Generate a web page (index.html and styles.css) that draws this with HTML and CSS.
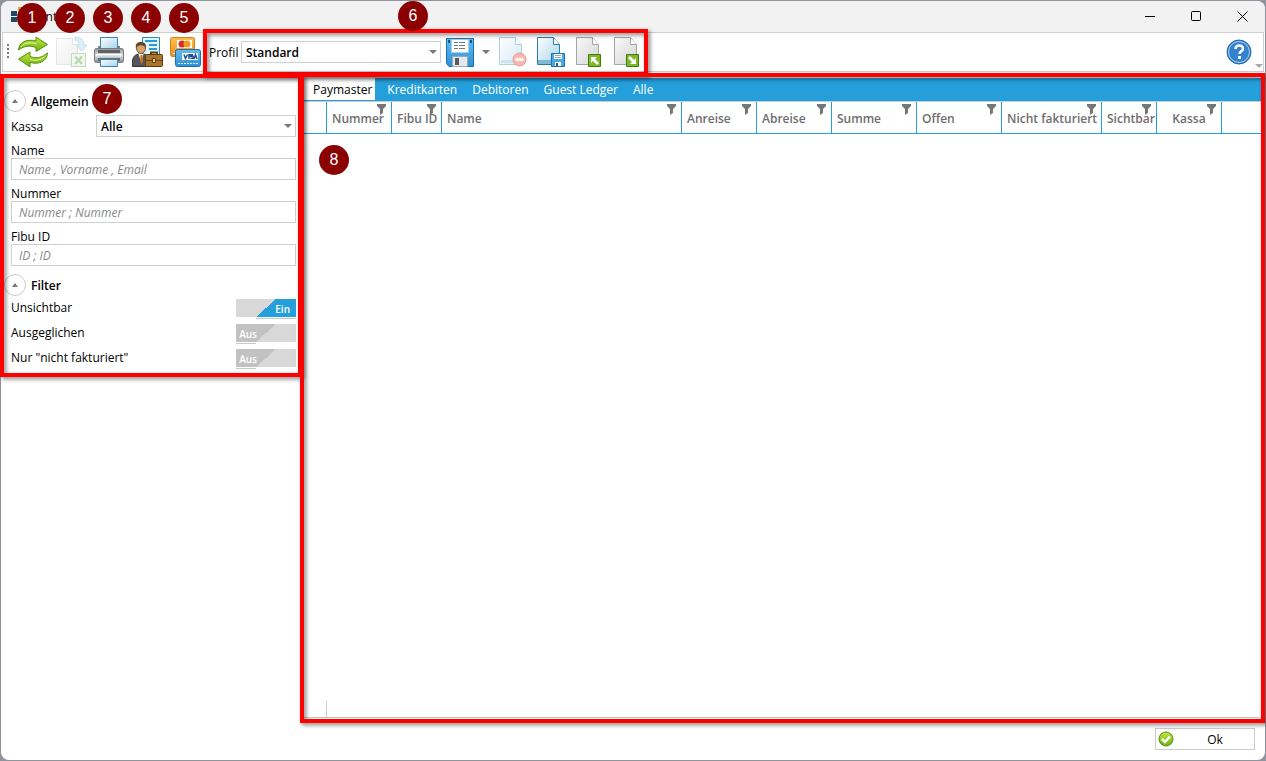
FILE: index.html
```html
<!DOCTYPE html>
<html lang="de">
<head>
<meta charset="utf-8">
<title>Konten</title>
<meta name="viewport" content="width=device-width, initial-scale=1">
<link rel="stylesheet" href="styles.css">
</head>
<body>
<svg class="defs" aria-hidden="true">
  <defs>
    <linearGradient id="green" x1="0" y1="0" x2="0" y2="1"><stop offset="0" stop-color="#c3e63c"/><stop offset="1" stop-color="#6fb00f"/></linearGradient>
    <linearGradient id="paper" x1="0" y1="0" x2="1" y2="1"><stop offset="0" stop-color="#fafafa"/><stop offset="1" stop-color="#d2d3d4"/></linearGradient>
    <linearGradient id="bluepaper" x1="0" y1="0" x2="1" y2="1"><stop offset="0" stop-color="#ffffff"/><stop offset="1" stop-color="#a5d3ea"/></linearGradient>
    <linearGradient id="metal" x1="0" y1="0" x2="0" y2="1"><stop offset="0" stop-color="#8f9296"/><stop offset=".5" stop-color="#e2e4e6"/><stop offset="1" stop-color="#85888b"/></linearGradient>
    <linearGradient id="blue" x1="0" y1="0" x2="0" y2="1"><stop offset="0" stop-color="#62bdf0"/><stop offset="1" stop-color="#2f90d4"/></linearGradient>
    <linearGradient id="gold" x1="0" y1="0" x2="0" y2="1"><stop offset="0" stop-color="#fbc04d"/><stop offset="1" stop-color="#ef8f1c"/></linearGradient>
    <symbol id="filter" viewBox="0 0 9 11"><path fill="#777" d="M0 0h9v2L6 5v4l-3 2V5L0 2z"/></symbol>
  </defs>
</svg>

<div class="window">
  <header class="titlebar">
    <svg class="app-icon" width="14" height="16" viewBox="0 0 14 16" aria-hidden="true"><path fill="#1f4766" d="M0 4h6v5H0zM0 10h6v5H0z"/><path fill="#dba42e" d="M7 0h6v7H7z"/><path fill="#2e6f9e" d="M7 8h6v7H7z"/></svg>
    <h1>Konten</h1>
    <div class="controls">
      <button type="button" aria-label="Minimieren"><svg width="11" height="11" viewBox="0 0 11 11"><path d="M0 5.500h10"/></svg></button>
      <button type="button" aria-label="Maximieren"><svg width="11" height="11" viewBox="0 0 11 11"><rect x=".5" y=".5" width="9" height="9" rx="1"/></svg></button>
      <button type="button" aria-label="Schließen"><svg width="11" height="11" viewBox="0 0 11 11"><path d="M.5.5l10 10M10.500.5l-10 10"/></svg></button>
    </div>
  </header>

  <div class="toolbar" role="toolbar">
    <span class="grip"></span>
    <div class="tool">
      <button type="button" aria-label="Aktualisieren"><svg width="32" height="32" viewBox="0 0 32 32"><g fill="url(#green)" stroke="#548f10" stroke-linejoin="round"><path d="M1.500 14C2 6.500 9 2.500 19 5V1l11.500 7.500L19 15.500v-4C12 9 7 10 1.500 14z"/><path d="M30.500 17c-.5 8-8 12-17.500 9.500V31L1.500 23 13 16v4.500c7 2.500 12 1 17.500-3.500z"/></g><path fill="none" stroke="#e4f5a0" d="M4 11c3-4 8-5 15.500-3.500M27 21c-3 3-8 4-14 2.500"/></svg></button>
      <span class="badge">1</span>
    </div>
    <div class="tool">
      <button type="button" aria-label="Excel-Export" disabled><svg width="32" height="32" viewBox="0 0 32 32"><g opacity=".35"><path fill="url(#paper)" stroke="#b4b7ba" d="M1.500 2.500h16l5 6v20h-21z"/><path fill="#fff" stroke="#b4b7ba" d="M17.500 2.500v6h5"/><path fill="#9bd0ee" stroke="#5b9fca" d="M20 1c6 0 9 3 9 8h3l-5.500 6L21 9h3c0-3-1-5-4-5z"/><rect x="16.500" y="17.500" width="14" height="13" fill="#d8efd0" stroke="#4e9b43"/><path stroke="#3a9530" stroke-width="2.500" d="M20 20.500l7 7.500M27 20.500l-7 7.500"/></g></svg></button>
      <span class="badge">2</span>
    </div>
    <div class="tool">
      <button type="button" aria-label="Drucken"><svg width="32" height="32" viewBox="0 0 32 32"><path fill="#808386" d="M5 10h22v5H5z"/><path fill="url(#bluepaper)" stroke="#3b84b9" d="M7.500 1.500h17v11h-17z"/><rect x="1.500" y="12.500" width="29" height="14" rx="2" fill="url(#metal)" stroke="#777b80"/><path fill="#5e6265" d="M5 14h22v3H5z"/><path stroke="#fff" d="M3 18.500h26"/><path fill="#6b6e71" d="M5 22h22v3H5z"/><path fill="url(#bluepaper)" stroke="#3b84b9" d="M7.500 23.500h17v7h-17z"/></svg></button>
      <span class="badge">3</span>
    </div>
    <div class="tool">
      <button type="button" aria-label="Firmenkonto"><svg width="32" height="32" viewBox="0 0 32 32"><path fill="#e4f4fc" stroke="#2886bd" d="M11.500 1.500h17v18h-17z"/><path stroke="#2b9bd6" stroke-width="2" d="M14 5h12M18 9h8M18 13h8"/><path fill="#55585b" stroke="#333" d="M1.500 30.500c-.5-9 1-11 6-12.500h5c5 1 6 4 6 12.500z"/><path fill="#fff" d="M7.500 18h5l-2 9z"/><path fill="#c8741e" d="M9.500 19h2l.5 6-1.500 3-1.500-3z"/><ellipse cx="10" cy="12" rx="4.500" ry="5.500" fill="#dca36c" stroke="#7b5a35"/><path fill="#5a4a30" d="M5 12C4 8 6.500 5.500 10.500 6c4 .5 5 3 4 6-1-2-3-3-5.500-2.500-2 0-3 1-4 2.500z"/><path fill="none" stroke="#5b3b10" stroke-width="2" d="M20 19v-2.500h6V19"/><rect x="14.500" y="18.500" width="17" height="12" rx="1" fill="#a9742b" stroke="#5b3b10"/><path stroke="#6b4514" d="M15 24.500h16"/><path fill="#f1d36b" stroke="#5b3b10" d="M21.500 22.500h3v4h-3z"/></svg></button>
      <span class="badge">4</span>
    </div>
    <div class="tool">
      <button type="button" aria-label="Kreditkarten"><svg width="32" height="32" viewBox="0 0 32 32"><rect x="1.500" y="1.500" width="24" height="19" rx="2" fill="url(#gold)" stroke="#d07e16"/><rect x="8" y="4" width="15" height="8" fill="#fff"/><circle cx="13" cy="8" r="3.500" fill="#d92b24"/><circle cx="18" cy="8" r="3.500" fill="#f29b20"/><path stroke="#fff" d="M4 17.500h4"/><rect x="6.500" y="13.500" width="25" height="17" rx="2" fill="url(#blue)" stroke="#1f6ca8"/><rect x="13" y="17" width="16" height="7" fill="#fff"/><path fill="none" stroke="#1f4e93" stroke-width="1.500" d="M15 18.500l1.500 4 2-4M20 18v5M24 18.700h-2.500v1.500H24v2h-2.500M25 23l1.500-4.500L28 23"/><path stroke="#d8effb" stroke-dasharray="2 1" d="M9 27.500h20"/></svg></button>
      <span class="badge">5</span>
    </div>

    <div class="profile">
      <label for="profil">Profil</label>
      <span class="select"><select id="profil"><option>Standard</option></select></span>
      <button type="button" aria-label="Profil speichern"><svg width="30" height="32" viewBox="0 0 30 32"><path fill="url(#blue)" stroke="#1b70b0" stroke-linejoin="round" d="M1.500 2.500h27v28H4l-2.500-3z"/><path fill="#fff" stroke="#a9cfe6" d="M6.500 3.500h17v13h-17z"/><path stroke="#777" stroke-dasharray="4 1 6 1" d="M9 6.500h12M9 9.500h12M9 12.500h12"/><path fill="#e6e9ec" stroke="#9aa9b5" d="M7.500 20.500h15v10h-15z"/><path fill="#555b61" d="M10 22h4v7h-4z"/><path fill="#14598e" d="M3 4h2v3H3zM25 4h2v3h-2z"/></svg></button>
      <button type="button" class="drop" aria-label="Speicheroptionen"><span class="arrow"></span></button>
      <button type="button" aria-label="Profil löschen" disabled><svg width="32" height="32" viewBox="0 0 32 32"><g opacity=".45"><path fill="url(#bluepaper)" stroke="#4a9bc6" d="M3.500 1.500h16l6 7v20h-22z"/><path fill="#fff" stroke="#4a9bc6" d="M19.500 1.500v7h6"/><path fill="#8dc4de" d="M5 24h19v3H5z"/></g><circle cx="23.500" cy="23.500" r="6.500" fill="#f8b9b5" stroke="#eb9a95"/><path stroke="#fff" stroke-width="2.500" d="M19.500 23.500h8"/></svg></button>
      <button type="button" aria-label="Profil speichern unter"><svg width="32" height="32" viewBox="0 0 32 32"><path fill="url(#bluepaper)" stroke="#2a7eae" d="M3.500 1.500h16l6 7v20h-22z"/><path fill="#fff" stroke="#2a7eae" d="M19.500 1.500v7h6"/><path fill="#7fb9d6" d="M4 24h19v4H4z"/><path fill="#4aa8e2" stroke="#1b70b0" d="M17.500 17.500h13v13h-13z"/><path fill="#fff" d="M20 18h8v5h-8zM21 26h6v4h-6z"/><path stroke="#9aa" d="M21 19.500h6M21 21.500h6"/><path fill="#1b5d90" d="M22 27h2v3h-2z"/></svg></button>
      <button type="button" aria-label="Profil importieren"><svg width="32" height="32" viewBox="0 0 32 32"><path fill="url(#paper)" stroke="#a3a6a8" d="M4.500 1.500h16l6 7v20h-22z"/><path fill="#fff" stroke="#a3a6a8" d="M20.500 1.500v7h6"/><path fill="#7fb927" stroke="#3f7d12" d="M16.500 18.500h12v12h-12z"/><path fill="#fff" d="M19 21h6l-2 2 4 4-2 2-4-4-2 2z"/></svg></button>
      <button type="button" aria-label="Profil exportieren"><svg width="32" height="32" viewBox="0 0 32 32"><path fill="url(#paper)" stroke="#a3a6a8" d="M4.500 1.500h16l6 7v20h-22z"/><path fill="#fff" stroke="#a3a6a8" d="M20.500 1.500v7h6"/><path fill="#7fb927" stroke="#3f7d12" d="M16.500 18.500h12v12h-12z"/><path fill="#fff" d="M26 28h-6l2-2-4-4 2-2 4 4 2-2z"/></svg></button>
      <span class="frame"></span>
      <span class="badge">6</span>
    </div>

    <button type="button" class="help" aria-label="Hilfe"><svg width="26" height="26" viewBox="0 0 26 26"><circle cx="13" cy="13" r="12" fill="#3482cc" stroke="#2465ac"/><circle cx="13" cy="13" r="10.500" fill="none" stroke="#a9d4f3"/><path fill="none" stroke="#fff" stroke-width="2.500" d="M9.500 10c0-4.500 7.500-4.500 7.500-.5 0 3-3.500 2.500-3.500 5.500"/><path fill="#fff" d="M12 17h3v3h-3z"/></svg></button>
    <span class="overflow"></span>
  </div>

  <main class="main">
    <aside class="sidebar">
      <div class="group">
        <button type="button" class="collapse" aria-label="Allgemein einklappen"><span class="arrow-up"></span></button>
        <h2>Allgemein</h2>
        <span class="badge">7</span>
      </div>
      <div class="row kassa">
        <label for="kassa">Kassa</label>
        <span class="select"><select id="kassa"><option>Alle</option></select></span>
      </div>
      <div class="field"><label for="name">Name</label><input id="name" type="text" placeholder="Name , Vorname , Email"></div>
      <div class="field"><label for="nummer">Nummer</label><input id="nummer" type="text" placeholder="Nummer ; Nummer"></div>
      <div class="field"><label for="fibu">Fibu ID</label><input id="fibu" type="text" placeholder="ID ; ID"></div>
      <div class="group second">
        <button type="button" class="collapse" aria-label="Filter einklappen"><span class="arrow-up"></span></button>
        <h2>Filter</h2>
      </div>
      <label class="row switch"><span>Unsichtbar</span><input type="checkbox" checked><span class="state">Ein</span></label>
      <label class="row switch"><span>Ausgeglichen</span><input type="checkbox"><span class="state">Aus</span></label>
      <label class="row switch"><span>Nur "nicht fakturiert"</span><input type="checkbox"><span class="state">Aus</span></label>
      <span class="frame"></span>
    </aside>

    <section class="content">
      <nav class="tabs" role="tablist">
        <button type="button" role="tab" aria-selected="true">Paymaster</button>
        <button type="button" role="tab">Kreditkarten</button>
        <button type="button" role="tab">Debitoren</button>
        <button type="button" role="tab">Guest Ledger</button>
        <button type="button" role="tab">Alle</button>
      </nav>
      <table class="grid">
        <colgroup><col class="w-mark"><col class="w-65"><col class="w-50"><col class="w-240"><col class="w-75"><col class="w-75"><col class="w-85"><col class="w-85"><col class="w-100"><col class="w-55"><col class="w-65"><col></colgroup>
        <thead>
          <tr>
            <th></th>
            <th>Nummer<svg class="funnel"><use href="#filter"/></svg></th>
            <th>Fibu ID<svg class="funnel"><use href="#filter"/></svg></th>
            <th>Name<svg class="funnel"><use href="#filter"/></svg></th>
            <th>Anreise<svg class="funnel"><use href="#filter"/></svg></th>
            <th>Abreise<svg class="funnel"><use href="#filter"/></svg></th>
            <th>Summe<svg class="funnel"><use href="#filter"/></svg></th>
            <th>Offen<svg class="funnel"><use href="#filter"/></svg></th>
            <th>Nicht fakturiert<svg class="funnel"><use href="#filter"/></svg></th>
            <th>Sichtbar<svg class="funnel"><use href="#filter"/></svg></th>
            <th class="center">Kassa<svg class="funnel"><use href="#filter"/></svg></th>
            <th></th>
          </tr>
        </thead>
      </table>
      <div class="rows"><span class="badge">8</span></div>
      <div class="summary"><span></span></div>
      <span class="frame"></span>
    </section>
  </main>

  <footer class="footer">
    <button type="button" class="ok"><svg width="16" height="16" viewBox="0 0 16 16" aria-hidden="true"><circle cx="8" cy="8" r="7" fill="url(#green)" stroke="#4f8f10"/><path fill="none" stroke="#fff" stroke-width="2.500" d="M4 8l3 3 5-5.500"/></svg><span>Ok</span></button>
  </footer>
</div>
</body>
</html>
```
FILE: styles.css
```css
* { box-sizing: border-box; }

body {
  margin: 0;
  padding: 1px;
  min-height: 100vh;
  display: flex;
  background: #8f959f;
  font: 12px/16px "Open Sans", "Noto Sans", sans-serif;
  color: #000;
}

button, input, select { font: inherit; color: inherit; }
button { padding: 0; border: 0; background: none; }
h1, h2 { margin: 0; font-size: 12px; }
svg { display: block; }
.defs { position: absolute; width: 0; height: 0; }

.window {
  flex: 1;
  min-width: 0;
  display: flex;
  flex-direction: column;
  background: #fff;
  border-radius: 8px;
}

.titlebar {
  display: flex;
  align-items: center;
  height: 31px;
  padding-left: 10px;
  background: #f2f2f2;
  border-radius: 8px 8px 0 0;
}
.app-icon { margin-bottom: 4px; }
.titlebar h1 { margin-left: 6px; font-weight: 400; }
.controls { display: flex; margin-left: auto; }
.controls button {
  width: 46px;
  height: 28px;
  display: grid;
  place-items: center;
}
.controls svg { fill: none; stroke: #000; }

.toolbar {
  display: flex;
  align-items: center;
  height: 40px;
  margin: 0 1px;
  border: 1px solid #cfcfcf;
}
.grip {
  width: 2px;
  height: 16px;
  margin: 0 5px 0 4px;
  background: repeating-linear-gradient(#777 0 2px, transparent 2px 4px);
}
.tool { position: relative; }
.tool button, .profile button {
  width: 38px;
  height: 38px;
  display: grid;
  place-items: center;
}
.profile {
  position: relative;
  display: flex;
  align-items: center;
  padding-left: 5px;
}
.profile label { width: 32px; padding-top: 2px; }
.profile .select { width: 200px; }
.profile .drop { width: 14px; }
.help { margin: 0 3px 0 auto; }
.overflow {
  align-self: flex-end;
  margin: 0 0 3px;
  border: 4px solid transparent;
  border-top-color: #aaa;
  border-bottom: 0;
}

.arrow {
  border: 4px solid transparent;
  border-top-color: #777;
  border-bottom: 0;
}
.arrow-up {
  border: 3px solid transparent;
  border-bottom: 4px solid #777;
  border-top: 0;
}

.select { position: relative; display: block; }
.select select {
  display: block;
  width: 100%;
  height: 22px;
  padding: 1px 4px 0;
  appearance: none;
  border: 1px solid #d0d0d0;
  border-radius: 0;
  background: #fff;
  font-weight: 600;
}
.select::after {
  content: "";
  position: absolute;
  right: 4px;
  top: 9px;
  border: 4px solid transparent;
  border-top-color: #777;
  border-bottom: 0;
  pointer-events: none;
}

.badge {
  position: absolute;
  z-index: 3;
  width: 30px;
  height: 30px;
  border-radius: 50%;
  background: #8b0000;
  color: #fff;
  font: 16px/30px "Liberation Sans", sans-serif;
  text-align: center;
}
.tool .badge { left: 3px; top: -30px; }
.profile .badge { left: 194px; top: -32px; }
.group .badge { left: 88px; top: -6px; }
.rows .badge { left: 15px; top: 11px; }

.frame {
  position: absolute;
  z-index: 2;
  inset: -4px;
  border: 4px solid #f00;
  filter: drop-shadow(2px 2px 2px rgba(0, 0, 0, .5));
  pointer-events: none;
}
.profile .frame { inset: -4px -3px -5px -1px; }
.content .frame { inset: -5px -4px; }

.main {
  flex: 1;
  display: flex;
  gap: 6px;
  align-items: stretch;
  padding: 6px 4px 0 3px;
}

.sidebar {
  position: relative;
  flex: 0 0 294px;
  align-self: flex-start;
  padding: 12px 2px 2px 7px;
}
.group {
  position: relative;
  display: flex;
  align-items: center;
  gap: 5px;
  height: 22px;
  margin-left: -7px;
}
.group.second { margin-top: 8px; }
.group h2 { font-weight: 600; padding-top: 2px; }
.collapse {
  width: 22px;
  height: 22px;
  display: grid;
  place-items: center;
  border: 1px solid #ccc;
  border-radius: 50%;
}
.row { display: flex; align-items: center; }
.kassa { margin-top: 3px; }
.kassa label { width: 85px; padding-top: 2px; }
.kassa .select { flex: 1; }
.field { margin-top: 5px; }
.field label { display: block; height: 16px; padding-top: 1px; }
.field input {
  display: block;
  width: 100%;
  height: 22px;
  padding: 0 7px;
  border: 1px solid #d0d0d0;
}
.field input::placeholder { color: #888; font-style: italic; opacity: 1; }

.switch { position: relative; height: 25px; }
.switch span { padding-bottom: 1px; }
.switch input {
  appearance: none;
  width: 60px;
  height: 20px;
  margin: 1px 0 0 auto;
  background:
    linear-gradient(#c8c8c8, #c8c8c8) 0 19px / 20px 1px no-repeat,
    linear-gradient(138deg, #c2c2c2 50%, #d8d8d8 50%) 0 0 / 60px 18px no-repeat;
}
.switch input:checked {
  background:
    linear-gradient(#c8c8c8, #c8c8c8) 20px 19px / 40px 1px no-repeat,
    linear-gradient(138deg, #d8d8d8 50%, #259fdb 50%) 0 0 / 60px 18px no-repeat;
}
.switch .state {
  position: absolute;
  right: 39px;
  padding: 0;
  font-size: 10px;
  font-weight: 600;
  color: #fff;
  pointer-events: none;
}
.switch input:checked + .state { right: 6px; }

.content {
  position: relative;
  flex: 1;
  min-width: 0;
  display: flex;
  flex-direction: column;
}
.tabs {
  display: flex;
  height: 24px;
  background: #259fdb;
  border-bottom: 1px solid #ccc;
}
.tabs button { padding: 1px 3px 0 12px; color: #fff; }
.tabs [aria-selected] {
  padding: 2px 3px 0 9px;
  margin-bottom: 1px;
  background: #fff;
  color: #000;
}

.grid {
  width: 100%;
  table-layout: fixed;
  border-collapse: separate;
  border-spacing: 0;
}
.w-mark { width: 23px; }
.w-50 { width: 50px; }
.w-55 { width: 55px; }
.w-65 { width: 65px; }
.w-75 { width: 75px; }
.w-85 { width: 85px; }
.w-100 { width: 100px; }
.w-240 { width: 240px; }
.grid th {
  position: relative;
  height: 32px;
  padding: 3px 0 0 5px;
  border-right: 1px solid #259fdb;
  border-bottom: 1px solid #259fdb;
  text-align: left;
  white-space: nowrap;
  font-weight: 600;
  color: #6e6e6e;
}
.grid th:last-child { border-right: 0; }
.grid th.center { padding-left: 0; text-align: center; }
.funnel {
  position: absolute;
  top: 2px;
  right: 5px;
  width: 9px;
  height: 11px;
}
.rows { position: relative; flex: 1; }
.summary { height: 17px; border-bottom: 1px solid #ccc; }
.summary span {
  display: block;
  width: 23px;
  height: 16px;
  border-right: 1px solid #ccc;
}

.footer {
  display: flex;
  justify-content: flex-end;
  padding: 10px;
}
.ok {
  width: 100px;
  height: 22px;
  display: flex;
  align-items: center;
  padding: 0 2px;
  border: 1px solid #ccc;
}
.ok span { flex: 1; padding: 2px 0 0 4px; }
```
